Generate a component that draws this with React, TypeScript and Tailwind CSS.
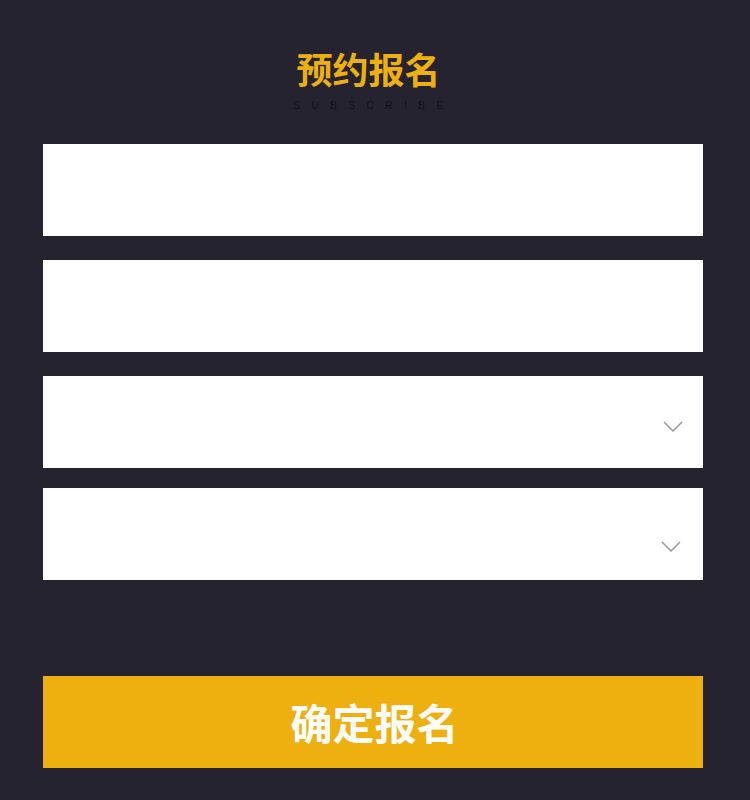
import React from "react";

function Chevron() {
  return (
    <svg width="20" height="11" viewBox="0 0 20 11" fill="none">
      <path d="M1 1 L10 10 L19 1" stroke="#9a9a9a" strokeWidth="1.5" />
    </svg>
  );
}

export default function App() {
  return (
    <div
      className="w-[750px] h-[800px] bg-[#252330] flex flex-col"
      style={{ fontFamily: '"Noto Sans CJK SC", "Noto Sans", sans-serif' }}
    >
      <div className="flex flex-col items-center pt-[42px] pr-[13px]">
        <div className="text-[36px] leading-[52px] font-bold text-[#eeb00f]">预约报名</div>
        <div className="text-[10px] leading-[12px] tracking-[11.5px] text-[#111016] mt-[6px] pl-[11px]" style={{ fontFamily: '"Liberation Sans", sans-serif' }}>
          SUBSCRIBE
        </div>
      </div>
      <div className="pl-[43px] pr-[47px] mt-[32px] flex flex-col">
        <div className="h-[92px] bg-white" />
        <div className="h-[92px] bg-white mt-[24px]" />
        <div className="h-[92px] bg-white mt-[24px] flex items-center justify-end pr-[20px] pt-[8px]">
          <Chevron />
        </div>
        <div className="h-[92px] bg-white mt-[20px] flex items-end justify-end pr-[22px] pb-[28px]">
          <Chevron />
        </div>
        <button className="h-[92px] mt-[96px] bg-[#edb00f] text-white text-[42px] font-bold leading-none pl-[3px]">
          确定报名
        </button>
      </div>
    </div>
  );
}
